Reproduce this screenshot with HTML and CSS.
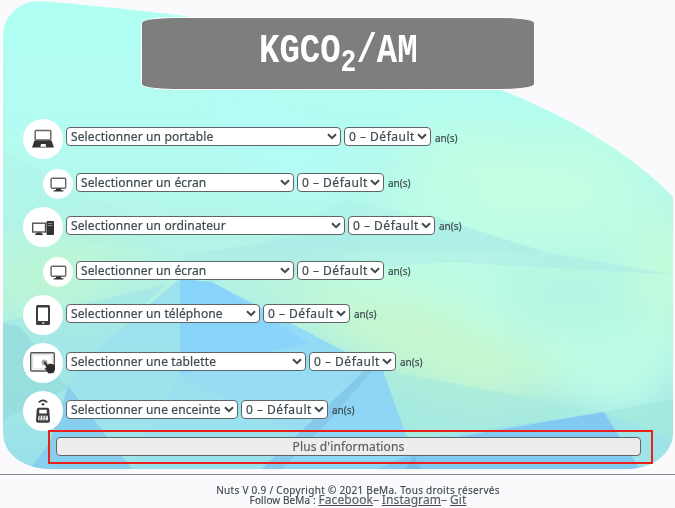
FILE: index.html
```html
<!DOCTYPE html>
<html lang="fr">
<head>
<meta charset="utf-8">
<title>Nuts</title>
<link rel="stylesheet" href="styles.css">
</head>
<body>
<svg width="0" height="0" class="defs">
  <symbol id="chev" viewBox="0 0 10 7"><path d="M1 1.200 5 5.200l4-4" fill="none" stroke="#3d4a50" stroke-width="2"/></symbol>
  <symbol id="screen" viewBox="0 0 30 30"><rect x="8.1" y="9.2" width="14.6" height="10" rx="1" fill="#fff" stroke="#666" stroke-width="1.4"/><path d="M13 19.500h5v1.200l2.500 1v.8h-10v-.8l2.500-1z" fill="#333"/></symbol>
</svg>
<main class="card">
  <svg class="backdrop" viewBox="0 0 675 472" aria-hidden="true">
    <defs>
      <clipPath id="blob"><path d="M3 36C3 15 20 1 40 1C300 22 545 68 673 197V432C673 455 650 469 627 469H51C24 469 3 455 3 432Z"/></clipPath>
      <linearGradient id="base" x1="0" y1="0" x2="0" y2="1"><stop offset="0" stop-color="#b0fff3"/><stop offset=".3" stop-color="#b4fbf0"/><stop offset=".6" stop-color="#b3f2e3"/><stop offset="1" stop-color="#98dfe9"/></linearGradient>
      <linearGradient id="blue" x1="0" y1="0" x2="0" y2="1"><stop offset="0" stop-color="#8ed8f8"/><stop offset="1" stop-color="#9cdfef"/></linearGradient>
      <filter id="soft"><feGaussianBlur stdDeviation="22"/></filter>
      <filter id="edge"><feGaussianBlur stdDeviation=".7"/></filter>
    </defs>
    <g clip-path="url(#blob)">
      <path fill="url(#base)" d="M0 0h675v472H0z"/>
      <g filter="url(#soft)">
        <path fill="#bdfde6" d="M420 120 640 130 690 350 640 420 400 350 290 300 370 240z"/>
        <path fill="#c4ffe2" d="M440 150 600 165 620 220 480 220z"/>
        <path fill="#c6f7cf" d="M250 280 430 295 580 380 480 410 380 370z"/>
        <path fill="#b4f6e2" d="M490 260 620 250 650 330 520 330z"/>
        <path fill="#c6fcd8" d="M640 220 690 220 690 330 650 320z"/>
        <path fill="#bdf6d3" d="M0 255 150 225 90 300 0 320z"/>
        <path fill="#b3fbf6" d="M190 80 340 130 340 200 250 180z"/>
      </g>
      <g filter="url(#edge)">
        <path fill="#aaf0e8" opacity=".25" d="M3 152 125 214 180 256 3 230z"/>
        <path fill="#a7e7e7" opacity=".4" d="M180 256 430 215 545 252 675 275 450 262 212 282z"/>
        <path fill="#a7e7e7" opacity=".3" d="M345 200 450 222 545 252 400 250 250 250z"/>
        <path fill="#a0e5e7" opacity=".6" d="M3 322 165 285 90 358 68 388 3 420z"/>
        <path fill="#95dbdd" opacity=".7" d="M3 323 20 327 68 388 3 420z"/>
        <path fill="url(#blue)" d="M180 279 212 282 382 371 330 469H132L68 386 90 355z"/>
        <path fill="#a0e4e8" opacity=".75" d="M180 279 90 355 68 386 130 469 180 374z"/>
        <path fill="#81cffb" opacity=".55" d="M180 279 212 282 308 343 180 374z"/>
        <path fill="#9ae1ee" opacity=".75" d="M180 374 130 469H262L290 430z"/>
        <path fill="#88cfee" d="M68 386 132 469H30L50 442z"/>
        <path fill="#8fd5f5" d="M364 371 383 370 418 469H262z"/>
        <path fill="#85caea" d="M364 371 372 371 330 420 282 469H262z"/>
        <path fill="#a8ebdd" opacity=".75" d="M383 370 604 412 460 437 409 443z"/>
        <path fill="#a2e8dd" opacity=".8" d="M604 412 675 399V442z"/>
        <path fill="#9de2e9" d="M406 441 604 412 675 442V469H415z"/>
        <path fill="#82c9f1" d="M451 438 604 412 640 469H378L409 455z"/>
        <path fill="#9ee3e8" d="M604 412 673 441 675 469H640z"/>
        <path fill="#75bce9" d="M414 455 421 469H405z"/>
      </g>
    </g>
  </svg>
  <h1 class="display"><span>KGCO<sub>2</sub>/AM</span></h1>
  <form class="devices">
    <div class="row first"><span class="ico"><svg viewBox="0 0 40 40"><rect x="12.200" y="11.500" width="15.600" height="9.500" rx="1" fill="#fff" stroke="#666" stroke-width="1.500"/><path d="M11.500 21.500h17l2.500 7H9z" fill="#333"/><path d="M18 25h4.500l.8 2.700h-6z" fill="#fff"/></svg></span>
      <span class="sel w1"><select><option>Selectionner un portable</option></select><svg><use href="#chev"/></svg></span><span class="sel yr"><select><option>0 – Défault</option></select><svg><use href="#chev"/></svg></span><label>an(s)</label></div>
    <div class="row sub"><span class="ico"><svg><use href="#screen"/></svg></span>
      <span class="sel w2"><select><option>Selectionner un écran</option></select><svg><use href="#chev"/></svg></span><span class="sel yr"><select><option>0 – Défault</option></select><svg><use href="#chev"/></svg></span><label>an(s)</label></div>
    <div class="row"><span class="ico"><svg viewBox="0 0 40 40"><rect x="9.700" y="16.200" width="12.800" height="8.800" fill="#fff" stroke="#555" stroke-width="1.400"/><path d="M14 25.500h4l2.500 2.500h-9z" fill="#333"/><rect x="23.500" y="14" width="7.500" height="14" rx="1" fill="#333"/><path d="M25 16.500h4.500M25 18.500h4.500" stroke="#888"/></svg></span>
      <span class="sel w3"><select><option>Selectionner un ordinateur</option></select><svg><use href="#chev"/></svg></span><span class="sel yr"><select><option>0 – Défault</option></select><svg><use href="#chev"/></svg></span><label>an(s)</label></div>
    <div class="row sub"><span class="ico"><svg><use href="#screen"/></svg></span>
      <span class="sel w2"><select><option>Selectionner un écran</option></select><svg><use href="#chev"/></svg></span><span class="sel yr"><select><option>0 – Défault</option></select><svg><use href="#chev"/></svg></span><label>an(s)</label></div>
    <div class="row"><span class="ico"><svg viewBox="0 0 40 40"><rect x="13" y="10" width="14" height="20" rx="1.500" fill="#3d3d3d"/><path fill="#fff" d="M15 12.500h10v13.500H15z"/><path fill="#ccc" d="M19 27.300h2.500v1.500H19z"/></svg></span>
      <span class="sel w5"><select><option>Selectionner un téléphone</option></select><svg><use href="#chev"/></svg></span><span class="sel yr"><select><option>0 – Défault</option></select><svg><use href="#chev"/></svg></span><label>an(s)</label></div>
    <div class="row"><span class="ico"><svg viewBox="0 0 40 40"><rect x="7.700" y="9.700" width="23.600" height="18.300" rx="1" fill="#fff" stroke="#555" stroke-width="1.400"/><rect x="9.700" y="11.700" width="19.600" height="14.300" fill="none" stroke="#ddd"/><circle cx="21.500" cy="19.500" r="3" fill="#aaa"/><path d="M20.500 19l1.500-.5 3 3.500 1-1.500 5 1 1 4-1.500 4.500-5 .5-2.500-3.500-1.500-2 2-.5z" fill="#2d2d2d"/></svg></span>
      <span class="sel w6"><select><option>Selectionner une tablette</option></select><svg><use href="#chev"/></svg></span><span class="sel yr"><select><option>0 – Défault</option></select><svg><use href="#chev"/></svg></span><label>an(s)</label></div>
    <div class="row"><span class="ico"><svg viewBox="0 0 40 40"><path d="M15.800 11.300Q20 7.300 24.200 11.300" fill="none" stroke="#3a3a3a" stroke-width="1.600"/><path d="M18 13q2-1.300 4 0l-2 1.800z" fill="#3a3a3a"/><path d="M15.500 16.700h9q1.500 0 1.800 2L27 29.500q0 2.300-2 2.300H15q-2 0-2-2.300l.7-10.800q.3-2 1.800-2z" fill="#3a3a3a"/><path fill="#fff" d="M16.200 18.800h7.600v3.600h-7.600zM15.500 24.800h9.200l.4 4.400H15.100z"/><path d="M16.300 26h7.600M16 28.200h8.300" stroke="#555" stroke-width="1.300" stroke-dasharray="1.700 1"/></svg></span>
      <span class="sel w7"><select><option>Selectionner une enceinte</option></select><svg><use href="#chev"/></svg></span><span class="sel yr"><select><option>0 – Défault</option></select><svg><use href="#chev"/></svg></span><label>an(s)</label></div>
  </form>
  <div class="highlight"><button type="button">Plus d'informations</button></div>
</main>
<footer>
  <p>Nuts V 0.9 / Copyright © 2021 BeMa. Tous droits réservés</p>
  <p class="follow">Follow BeMa : <a href="#">Facebook</a><i>–</i> <a href="#">Instagram</a><i>–</i> <a href="#">Git</a></p>
</footer>
</body>
</html>
```

FILE: styles.css
```css
* { box-sizing: border-box; }
body { margin: 0; height: 508px; overflow: hidden; background: #fafafd; color: #3d4a50; font-family: "Noto Sans", sans-serif; }
.defs { position: absolute; }
.card { position: relative; height: 474px; padding-top: 17px; }
.backdrop { position: absolute; left: 0; top: 0; width: 675px; height: 472px; z-index: -1; }
.display { width: 394px; height: 73px; margin: 0 0 0 141px; border: 1px solid #fff; border-radius: 32px / 6px; background: #7e7e7e; color: #fff; display: flex; justify-content: center; font: bold 40px/68px "Liberation Mono", monospace; }
.display span { transform: scaleX(.85); white-space: nowrap; }
.display sub { font-size: 31px; line-height: 0; vertical-align: -9px; }
.devices { display: flex; flex-direction: column; gap: 8px; padding: 29px 0 0 23px; }
.row { display: flex; height: 40px; align-items: flex-start; }
.row.first { margin-bottom: 2px; }
.ico { width: 40px; height: 40px; border-radius: 50%; background: #fff; margin-right: 3px; }
.ico svg { display: block; width: 100%; height: 100%; }
.sel { position: relative; height: 19px; margin: 9px 3px 0 0; }
.first .sel { margin-top: 8px; }
.sel select { appearance: none; display: block; width: 100%; height: 19px; padding: 0 0 0 4px; margin: 0; border: 1px solid #5f6468; border-radius: 4px; background: #fff; color: #3d4a50; font: 12px/17px "Noto Sans", sans-serif; letter-spacing: .13px; -webkit-text-stroke: .2px #3d4a50; }
.sel.yr select { letter-spacing: .5px; }
.sel svg { position: absolute; right: 4px; top: 6px; width: 10px; height: 7px; pointer-events: none; }
.w1 { width: 275px; }
.w2 { width: 218px; }
.w3 { width: 279px; }
.w5 { width: 194px; }
.w6 { width: 240px; }
.w7 { width: 172px; }
.yr { width: 87px; }
label { font-size: 10px; line-height: 14px; margin: 12px 0 0 1px; -webkit-text-stroke: .2px #3d4a50; }
.row.sub { height: 30px; padding-left: 20px; }
.sub .ico { width: 30px; height: 30px; }
.sub .sel { margin-top: 4px; }
.sub label { margin-top: 7px; }
.row:nth-child(3) { margin-bottom: 2px; }
.highlight { position: absolute; left: 48px; top: 430px; width: 605px; height: 34px; border: 2px solid #e8211b; padding: 5px 10px 0 6px; }
.highlight button { display: block; width: 100%; height: 19px; padding: 0; border: 1px solid #5f6468; border-radius: 4px; background: #ededed; color: #5e6366; font: 12px/17px "Noto Sans", sans-serif; letter-spacing: .13px; -webkit-text-stroke: .2px #5e6366; }
footer { border-top: 1px solid #858589; padding: 10px 0 0 41px; text-align: center; font-size: 10px; line-height: 11px; -webkit-text-stroke: .15px #3d4a50; }
footer p { margin: 0; white-space: nowrap; letter-spacing: .29px; }
footer .follow { line-height: 8px; letter-spacing: .1px; }
.follow a, .follow i { color: #5e6366; font-size: 12px; font-style: normal; }
```
